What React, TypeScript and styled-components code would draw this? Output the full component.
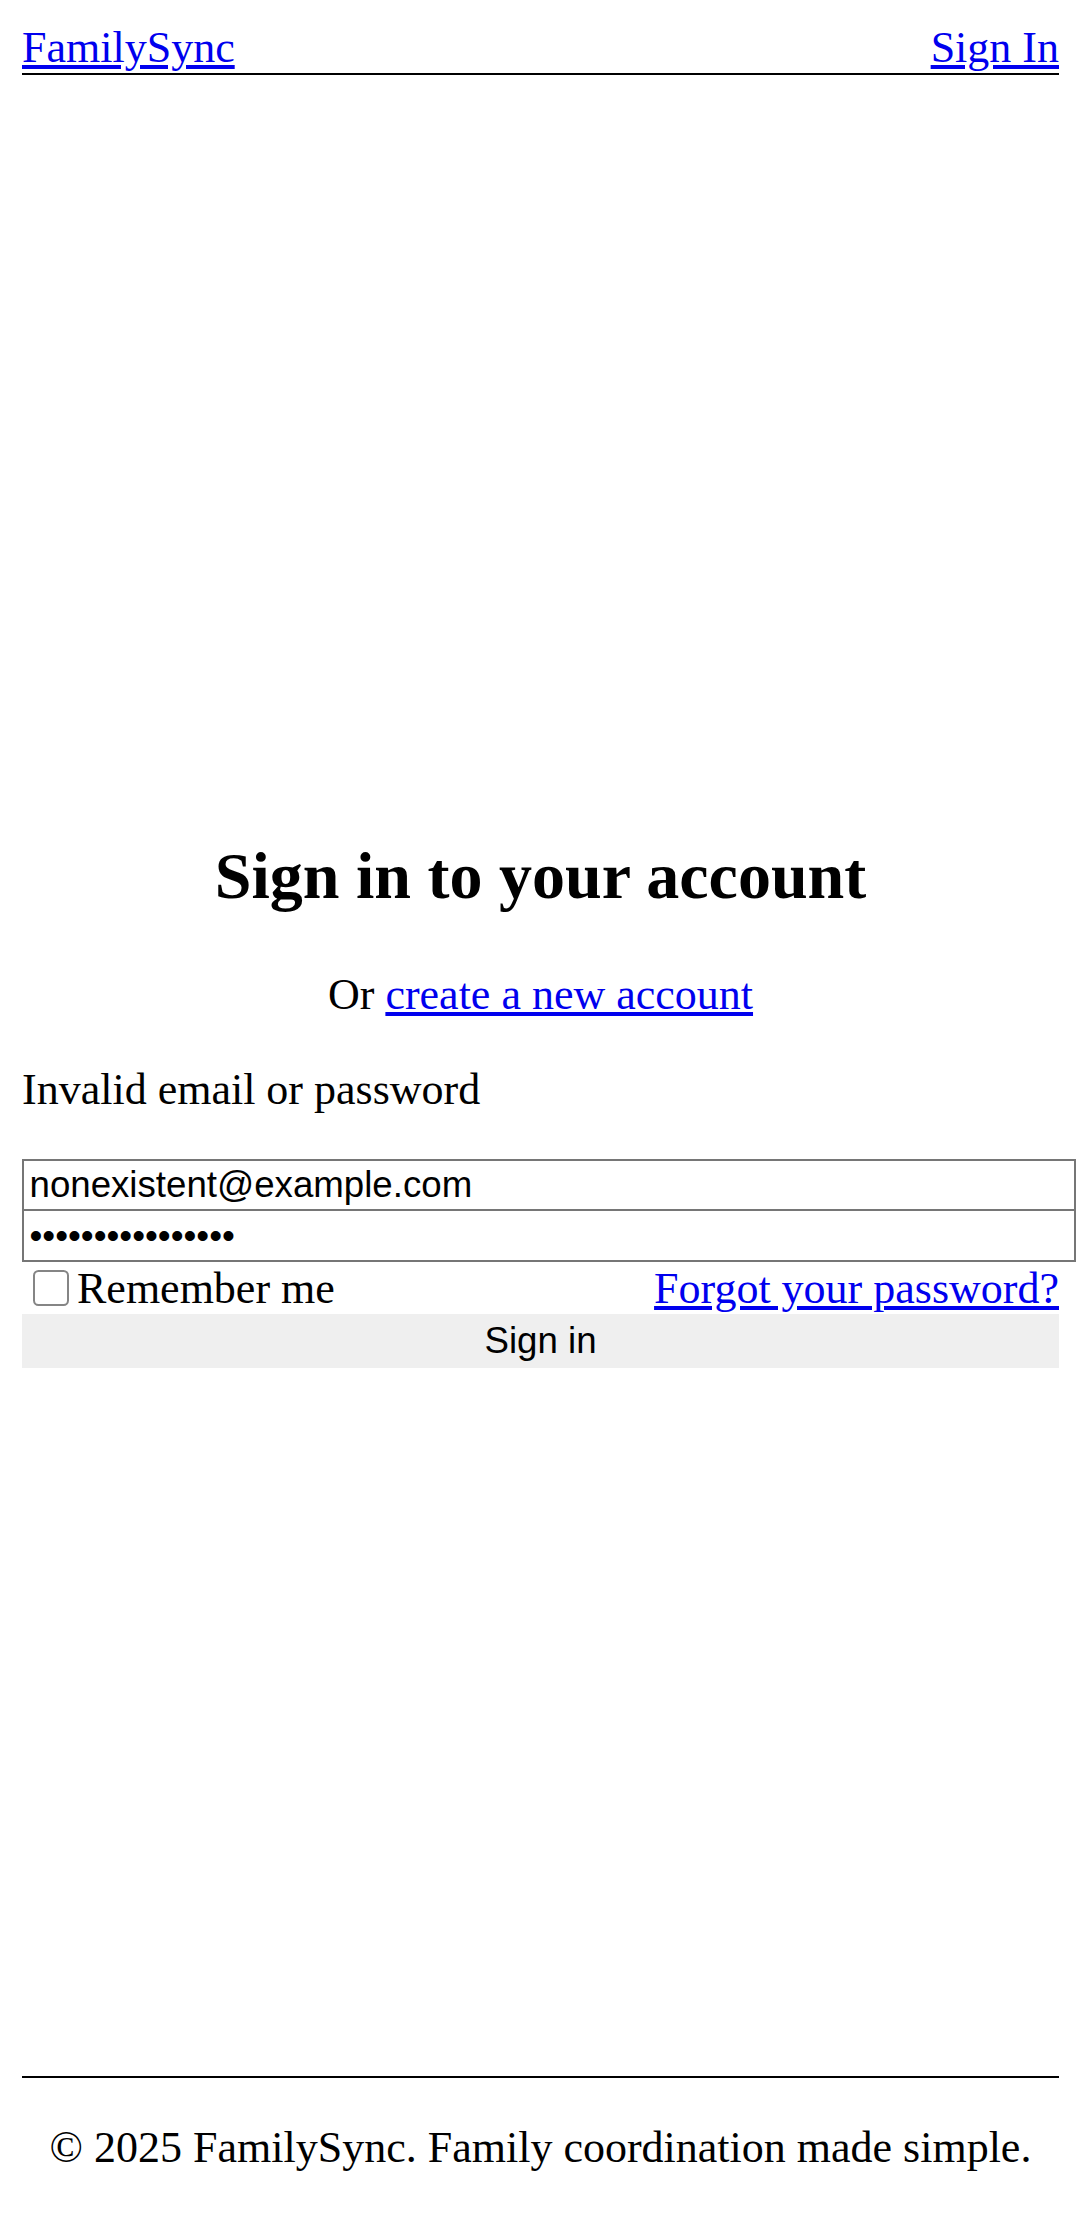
import styled, { createGlobalStyle } from "styled-components";

const GlobalStyle = createGlobalStyle`
  body {
    margin: 22px 0 22px 22px;
    font-family: "Liberation Serif", "Times New Roman", serif;
    font-size: 44px;
    color: #000;
    background: #fff;
  }
`;

const Page = styled.div`
  min-height: calc(100vh - 44px);
  padding-right: 22px;
  display: flex;
  flex-direction: column;
`;

const Header = styled.header`
  display: flex;
  justify-content: space-between;
  align-items: baseline;
  border-bottom: 2.75px solid #000;
`;

const Link = styled.a`
  color: #0000ee;
  text-decoration: underline;
`;

const Main = styled.main`
  flex: 1;
  display: flex;
  flex-direction: column;
  justify-content: center;
`;

const Card = styled.div`
  display: block;
`;

const Title = styled.h2`
  font-size: 66px;
  font-weight: bold;
  text-align: center;
  margin: 55px 0;
`;

const Lead = styled.p<{ $center?: boolean }>`
  margin: 0 0 44px;
  text-align: ${(p) => (p.$center ? "center" : "left")};
`;

const Form = styled.form`
  margin: 0;
  display: block;
`;

const Field = styled.input`
  display: block;
  width: calc(100% + 16.5px);
  box-sizing: border-box;
  margin: 0;
  padding: 3.5px 5.5px;
  border: 2.75px solid #767676;
  font-family: "Liberation Sans", Arial, sans-serif;
  font-size: 36.67px;
  line-height: normal;
  color: #000;
  background: #fff;
  outline: none;

  & + & {
    margin-top: -2.75px;
  }
`;

const OptionsRow = styled.div`
  display: flex;
  justify-content: space-between;
  align-items: center;
`;

const CheckLabel = styled.label`
  display: flex;
  align-items: center;
`;

const Check = styled.input`
  appearance: none;
  box-sizing: border-box;
  width: 35.75px;
  height: 35.75px;
  margin: 8.25px 8.25px 8.25px 11px;
  border: 2.75px solid #858585;
  border-radius: 5.5px;
  background: #fff;
`;

const SubmitButton = styled.button`
  display: block;
  width: 100%;
  margin: 0;
  padding: 6px 0;
  border: none;
  background: #efefef;
  color: #000;
  font-family: "Liberation Sans", Arial, sans-serif;
  font-size: 36.67px;
  line-height: normal;
`;

const Footer = styled.footer`
  border-top: 2.75px solid #000;
  padding: 44px 0;
  text-align: center;
`;

export default function App() {
  return (
    <>
      <GlobalStyle />
      <Page>
        <Header>
          <Link href="#">FamilySync</Link>
          <Link href="#">Sign In</Link>
        </Header>
        <Main>
          <Card>
            <Title>Sign in to your account</Title>
            <Lead $center>
              Or <Link href="#">create a new account</Link>
            </Lead>
            <Lead>Invalid email or password</Lead>
            <Form onSubmit={(e) => e.preventDefault()}>
              <Field type="email" defaultValue="nonexistent@example.com" readOnly />
              <Field type="password" defaultValue="wrongpassword123" readOnly />
              <OptionsRow>
                <CheckLabel>
                  <Check type="checkbox" />
                  Remember me
                </CheckLabel>
                <Link href="#">Forgot your password?</Link>
              </OptionsRow>
              <SubmitButton type="submit">Sign in</SubmitButton>
            </Form>
          </Card>
        </Main>
        <Footer>© 2025 FamilySync. Family coordination made simple.</Footer>
      </Page>
    </>
  );
}
